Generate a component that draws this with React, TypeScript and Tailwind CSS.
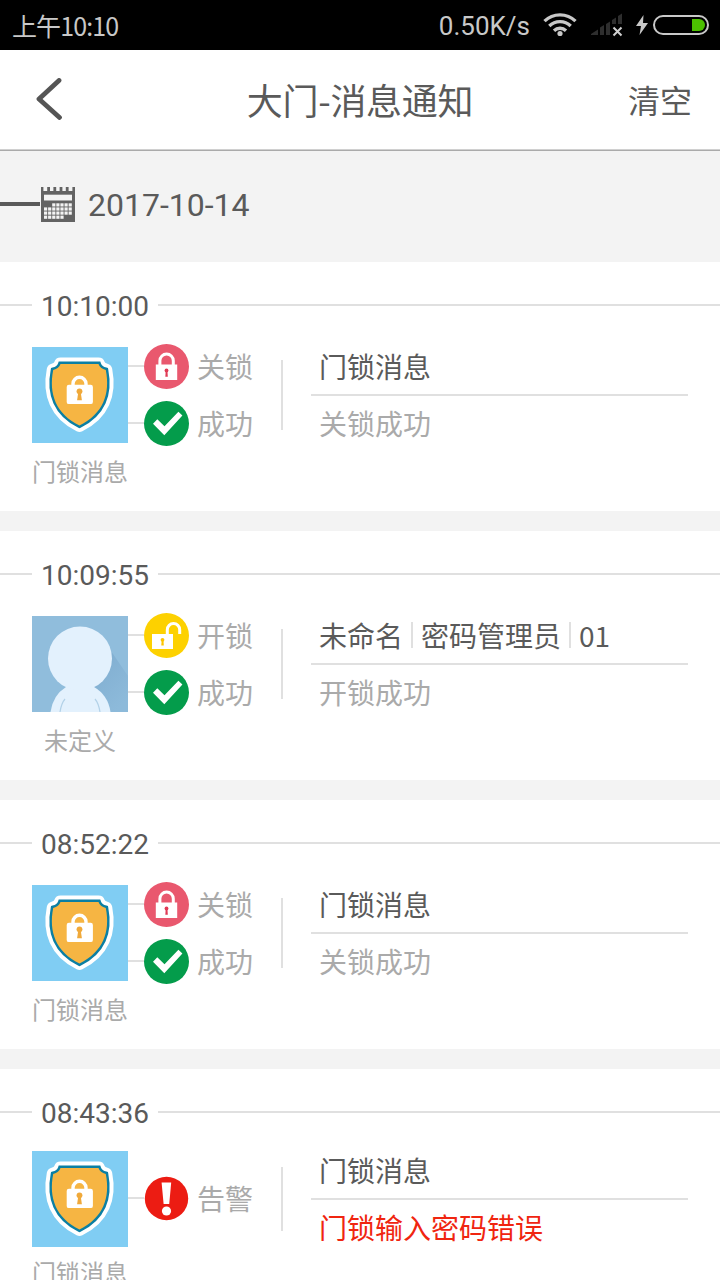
// Door lock message list: status bar, title bar, then one card per event
// grouped under the day they happened.

type Action = "lock" | "unlock" | "success" | "alarm";

type Badge = {
  action: Action;
  label: string;
};

type LockEvent = {
  time: string;
  avatar: "shield" | "person";
  name: string;
  badges: Badge[];
  /// Shown on the first line, split by thin dividers.
  title: string[];
  detail: string;
  alarm?: boolean;
};

const EVENTS: LockEvent[] = [
  {
    time: "10:10:00",
    avatar: "shield",
    name: "门锁消息",
    badges: [
      { action: "lock", label: "关锁" },
      { action: "success", label: "成功" },
    ],
    title: ["门锁消息"],
    detail: "关锁成功",
  },
  {
    time: "10:09:55",
    avatar: "person",
    name: "未定义",
    badges: [
      { action: "unlock", label: "开锁" },
      { action: "success", label: "成功" },
    ],
    title: ["未命名", "密码管理员", "01"],
    detail: "开锁成功",
  },
  {
    time: "08:52:22",
    avatar: "shield",
    name: "门锁消息",
    badges: [
      { action: "lock", label: "关锁" },
      { action: "success", label: "成功" },
    ],
    title: ["门锁消息"],
    detail: "关锁成功",
  },
  {
    time: "08:43:36",
    avatar: "shield",
    name: "门锁消息",
    badges: [{ action: "alarm", label: "告警" }],
    title: ["门锁消息"],
    detail: "门锁输入密码错误",
    alarm: true,
  },
];

const SHIELD =
  "M28.5 17H66.5Q68 21.5 73.8 23C78.5 47 71 67 47.5 78.5C24 67 16.5 47 21.2 23Q27 21.5 28.5 17Z";

function ShieldAvatar() {
  return (
    <svg viewBox="0 0 96 96" className="size-24 shrink-0">
      <rect width="96" height="96" fill="#80cdf3" />
      <path d={SHIELD} fill="#fff" stroke="#fff" strokeWidth="13" strokeLinejoin="round" />
      <path d={SHIELD} fill="#f6b543" stroke="#0b7fa3" strokeWidth="5" />
      <path d={SHIELD} fill="#f6b543" />
      <path d="M41 39v-2.2a6.5 6.5 0 0 1 13 0V39" fill="none" stroke="#fff" strokeWidth="3.4" />
      <rect x="34.7" y="37.7" width="26.2" height="19.4" rx="2.2" fill="#fff" />
      <circle cx="47.5" cy="44.3" r="2.9" fill="#f0a93a" />
      <path d="M46.3 45h2.4l1.2 8.3h-4.8z" fill="#f0a93a" />
    </svg>
  );
}

function PersonAvatar() {
  return (
    <svg viewBox="0 0 96 96" className="size-24 shrink-0">
      <defs>
        <linearGradient id="shade" x1="0" y1="0" x2="0.6" y2="1">
          <stop offset="0" stopColor="#7eaccf" />
          <stop offset="1" stopColor="#8dbada" />
        </linearGradient>
      </defs>
      <rect width="96" height="96" fill="#90bddc" />
      <path d="M79 35L96 60V96H74L60 66Z" fill="url(#shade)" />
      <path d="M34 71Q48 66 62 71Q76 79 78.5 96H18.5Q21 79 34 71Z" fill="#e3f1fd" />
      <circle cx="48" cy="42.5" r="32" fill="#e3f1fd" />
      <path d="M33 83Q29.5 87 28 96M63 83Q66.500 87 68 96" fill="none" stroke="#b3d2e8" strokeWidth="1.200" />
    </svg>
  );
}

function BadgeIcon({ action }: { action: Action }) {
  if (action === "lock") {
    return (
      <svg viewBox="0 0 45 45" className="size-[45px] shrink-0">
        <circle cx="22.5" cy="22.5" r="22.5" fill="#e9586e" />
        <path d="M15.9 21v-4.2a6.7 6.7 0 0 1 13.4 0V21" fill="none" stroke="#fff" strokeWidth="3" />
        <rect x="11.8" y="20.5" width="21.4" height="15.5" fill="#fff" />
        <circle cx="22.5" cy="26.5" r="1.9" fill="#e03a55" />
        <path d="M21.7 27h1.7l.4 5.8h-2.5z" fill="#e03a55" />
      </svg>
    );
  }
  if (action === "unlock") {
    return (
      <svg viewBox="0 0 45 45" className="size-[45px] shrink-0">
        <circle cx="22.5" cy="22.5" r="22.5" fill="#fdd100" />
        <path d="M23.3 22v-5.2a6.2 6.2 0 0 1 12.4 0V21" fill="none" stroke="#fff" strokeWidth="3" />
        <rect x="8" y="21" width="21" height="15" fill="#fff" />
        <circle cx="18.5" cy="26.8" r="1.9" fill="#fdc400" />
        <path d="M17.7 27h1.7l.4 5.5h-2.5z" fill="#fdc400" />
      </svg>
    );
  }
  if (action === "success") {
    return (
      <svg viewBox="0 0 45 45" className="size-[45px] shrink-0">
        <circle cx="22.5" cy="22.5" r="22.5" fill="#049c4b" />
        <path d="M9 22.7L13.3 18.3L20.5 25.2L34.4 10.8L38.4 14.5L20.3 34.3Z" fill="#fff" />
      </svg>
    );
  }
  return (
    <svg viewBox="0 0 45 45" className="size-[45px] shrink-0">
      <circle cx="22.5" cy="22.5" r="21.7" fill="#ec1c13" />
      <path d="M17.6 6.5H27.2L25.2 28H19.6Z" fill="#fff" />
      <circle cx="22.5" cy="35" r="4.6" fill="#fff" />
    </svg>
  );
}

function CalendarIcon() {
  const cells = [
    [2, 3, 4, 5, 6],
    [0, 1, 2, 3, 4, 5, 6],
    [0, 1, 2, 3, 4, 5, 6],
    [0, 1, 2, 3, 4],
  ];
  return (
    <svg viewBox="0 0 34 35" className="h-[35px] w-[34px] shrink-0">
      <path
        d="M0 0h2.4v4h3.8V0h2.8v4h3.4V0h2.8v4h3.4V0h2.8v4h3.400V0h2.800v4h3.800V0H34v35H0z"
        fill="#636363"
      />
      <rect x="3" y="7.7" width="28" height="5.8" fill="#f3f3f3" />
      {cells.map((row, y) =>
        row.map((x) => (
          <rect key={`${x}-${y}`} x={3 + x * 4.1} y={16.3 + y * 4.1} width="3.2" height="3.2" fill="#f3f3f3" />
        )),
      )}
    </svg>
  );
}

function StatusBar() {
  return (
    <div className="flex h-[50px] items-center bg-black pl-[12px] pr-[11px] text-[#c8c8c8]">
      <span className="text-[25px] leading-[50px] tracking-[-0.9px]">上午10:10</span>
      <span className="ml-auto pt-0.5 font-[Roboto] text-[26px] leading-[48px]">0.50K/s</span>
      <svg viewBox="0 0 34 26" className="ml-[13px] h-[26px] w-[34px]">
        <g fill="none" stroke="#c8c8c8" strokeWidth="3.3">
          <path d="M1.5 9.2A22 22 0 0 1 32.5 9.2" />
          <path d="M6.3 14A15.2 15.2 0 0 1 27.7 14" />
          <path d="M11 18.7A8.6 8.6 0 0 1 23 18.7" />
        </g>
        <circle cx="17" cy="21.5" r="2.6" fill="#c8c8c8" />
      </svg>
      <svg viewBox="0 0 32 24" className="ml-[14px] h-[24px] w-[32px]">
        <path
          d="M0 22V21L7 16.5V22ZM9 22V14.5L13 12V22ZM15 22V11L19 8.5V22ZM21 11V7L25 4.5V11ZM27 11V3L31 0.5V11Z"
          fill="#2e2e2e"
        />
        <path d="M22.5 14.500L30.500 22.500M30.500 14.500L22.500 22.500" stroke="#d0d0d0" strokeWidth="2" />
      </svg>
      <svg viewBox="0 0 12 20" className="ml-[13px] h-[20px] w-[12px]">
        <path d="M7.5 0L0 11H5L3.5 20L12 8H7Z" fill="#c8c8c8" />
      </svg>
      <div className="ml-[5px] flex h-[20px] w-[56px] justify-end rounded-full border-2 border-[#c8c8c8] p-[2px]">
        <div className="w-[13px] rounded-r-full bg-[#4cc000]" />
      </div>
    </div>
  );
}

function TitleBar() {
  return (
    <div className="grid h-[101px] grid-cols-[1fr_auto_1fr] items-center border-b border-[#aaa] bg-white text-[#5a5a5a] shadow-[inset_0_-1px_0_#d0d0d0]">
      <svg viewBox="0 0 26 42" className="mb-[2px] ml-[36px] h-[42px] w-[26px]">
        <path
          d="M23 2.5L3 21L23.500 39.500"
          fill="none"
          stroke="#555"
          strokeWidth="4.8"
          strokeLinecap="round"
          strokeLinejoin="round"
        />
      </svg>
      <h1 className="mb-[3px] text-[36px] tracking-[-0.3px]">大门-消息通知</h1>
      <button className="mr-[28px] mb-[3px] justify-self-end text-[32px]">清空</button>
    </div>
  );
}

function DayHeader({ date }: { date: string }) {
  return (
    <div className="flex h-[111px] items-center bg-[#f3f3f3] text-[#5a5a5a]">
      <div className="mb-[5px] h-1 w-10 bg-[#5a5a5a]" />
      <div className="mb-[5px] ml-px">
        <CalendarIcon />
      </div>
      <span className="mb-[3px] ml-[13px] font-[Roboto] text-[32px]">{date}</span>
    </div>
  );
}

function EventCard({ event }: { event: LockEvent }) {
  const { alarm } = event;
  return (
    <div className="h-[249px] bg-white">
      <div className="flex h-[82px] items-center pt-1">
        <div className="h-0.5 w-8 bg-[#e0e0e0]" />
        <span className="w-[126px] pt-1 text-center font-[Roboto] text-[28px] text-[#5a5a5a]">{event.time}</span>
        <div className="h-0.5 flex-1 bg-[#e0e0e0]" />
      </div>
      <div className="flex items-start pr-8">
        <div className={`ml-8 flex w-24 flex-col items-center ${alarm ? "" : "mt-[3px]"}`}>
          {event.avatar === "shield" ? <ShieldAvatar /> : <PersonAvatar />}
          <span className={`text-[24px] leading-9 whitespace-nowrap text-[#aaa] ${alarm ? "mt-[7px]" : "mt-[10px]"}`}>
            {event.name}
          </span>
        </div>
        <div className={`flex flex-col gap-3 ${alarm ? "mt-[25px]" : ""}`}>
          {event.badges.map((badge) => (
            <div key={badge.label} className="flex items-center">
              <div className="mb-px h-0.5 w-4 bg-[#e0e0e0]" />
              <BadgeIcon action={badge.action} />
              <span className="ml-2 text-[28px] leading-[45px] text-[#aaa]">{badge.label}</span>
            </div>
          ))}
        </div>
        <div className={`mt-4 ml-[28px] w-0.5 bg-[#e0e0e0] ${alarm ? "h-16" : "h-[70px]"}`} />
        <div className={`ml-[28px] flex-1 text-[28px] ${alarm ? "-mt-[3px]" : ""}`}>
          <div className="flex h-[52px] items-center border-b-2 border-[#e0e0e0] pb-[7px] pl-2 text-[#5a5a5a]">
            {event.title.map((part, i) => (
              <span
                key={part}
                className={`leading-[26px] ${i > 0 ? "ml-2 border-l-2 border-[#e0e0e0] pl-2" : ""}`}
              >
                {part}
              </span>
            ))}
          </div>
          <div className={`pl-2 leading-[55px] ${alarm ? "text-[#f02510]" : "text-[#aaa]"}`}>{event.detail}</div>
        </div>
      </div>
    </div>
  );
}

export default function App() {
  return (
    <div className="h-[1280px] w-[720px] overflow-hidden bg-[#f3f3f3] font-['Noto_Sans_CJK_SC',sans-serif]">
      <StatusBar />
      <TitleBar />
      <DayHeader date="2017-10-14" />
      <div className="flex flex-col gap-5">
        {EVENTS.map((event) => (
          <EventCard key={event.time} event={event} />
        ))}
      </div>
    </div>
  );
}
